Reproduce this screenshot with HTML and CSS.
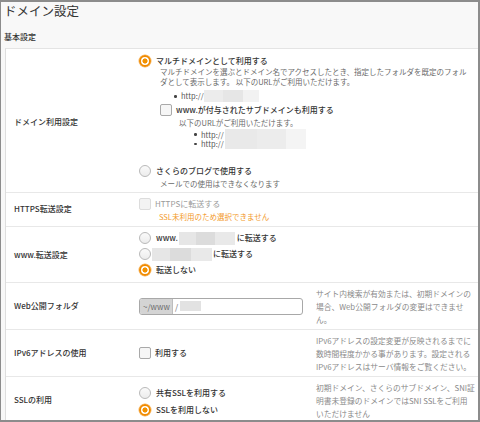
FILE: index.html
```html
<!DOCTYPE html>
<html lang="ja">
<head>
<meta charset="utf-8">
<link rel="stylesheet" href="styles.css">
</head>
<body>
<div class="frame">
  <h1 class="title">ドメイン設定</h1>
  <div class="section">基本設定</div>
  <div class="card">
    <div class="row row-domain">
      <div class="label">ドメイン利用設定</div>
      <div class="content">
        <div class="opt"><span class="radio on"></span><span class="opt-text">マルチドメインとして利用する</span></div>
        <p class="desc ind">マルチドメインを選ぶとドメイン名でアクセスしたとき、指定したフォルダを既定のフォル<br>ダとして表示します。 以下のURLがご利用いただけます。</p>
        <ul class="urls urls-1"><li>http://<span class="blur b1"></span></li></ul>
        <div class="sub">
          <div class="opt"><span class="check"></span><span class="opt-text">www.が付与されたサブドメインも利用する</span></div>
          <p class="desc sub-desc">以下のURLがご利用いただけます。</p>
          <div class="urls-2">
            <ul class="urls"><li>http://</li><li>http://</li></ul>
            <span class="blur b2"></span>
          </div>
        </div>
        <div class="opt opt-blog"><span class="radio"></span><span class="opt-text">さくらのブログで使用する</span></div>
        <p class="desc ind blog-desc">メールでの使用はできなくなります</p>
      </div>
    </div>

    <div class="row row-https">
      <div class="label">HTTPS転送設定</div>
      <div class="content">
        <div class="opt"><span class="check disabled"></span><span class="opt-text muted">HTTPSに転送する</span></div>
        <p class="warn">SSL未利用のため選択できません</p>
      </div>
    </div>

    <div class="row row-www">
      <div class="label">www.転送設定</div>
      <div class="content stack">
        <div class="opt"><span class="radio"></span><span class="opt-text">www.<span class="blur b3"></span>に転送する</span></div>
        <div class="opt"><span class="radio"></span><span class="opt-text tight"><span class="blur b4"></span>に転送する</span></div>
        <div class="opt"><span class="radio on"></span><span class="opt-text">転送しない</span></div>
      </div>
    </div>

    <div class="row row-help">
      <div class="label">Web公開フォルダ</div>
      <div class="content">
        <div class="input"><span class="prefix">~/www</span><span class="slash">/</span><span class="blur b5"></span></div>
      </div>
      <div class="help">サイト内検索が有効または、初期ドメインの<br>場合、Web公開フォルダの変更はできませ<br>ん。</div>
    </div>

    <div class="row row-help">
      <div class="label">IPv6アドレスの使用</div>
      <div class="content">
        <div class="opt"><span class="check"></span><span class="opt-text">利用する</span></div>
      </div>
      <div class="help">IPv6アドレスの設定変更が反映されるまでに<br>数時間程度かかる事があります。設定される<br>IPv6アドレスはサーバ情報をご覧ください。</div>
    </div>

    <div class="row row-help">
      <div class="label">SSLの利用</div>
      <div class="content stack ssl">
        <div class="opt"><span class="radio"></span><span class="opt-text">共有SSLを利用する</span></div>
        <div class="opt"><span class="radio on"></span><span class="opt-text">SSLを利用しない</span></div>
      </div>
      <div class="help">初期ドメイン、さくらのサブドメイン、SNI証<br>明書未登録のドメインではSNI SSLをご利用<br>いただけません</div>
    </div>
  </div>
</div>
</body>
</html>
```
FILE: styles.css
```css
* { box-sizing: border-box; }
html, body { margin: 0; padding: 0; }
body {
  font-family: "Noto Sans CJK JP", "Noto Sans", sans-serif;
  color: #333;
  background: #fff;
}
.frame {
  width: 480px;
  height: 422px;
  overflow: hidden;
  border-style: solid;
  border-color: #8c8c8c;
  border-width: 2px 2px 2px 1px;
  background: #f8f8f8;
}
.title {
  margin: 0;
  padding: 1px 0 0 3px;
  font-size: 12.5px;
  line-height: 16px;
  font-weight: 400;
  color: #333;
}
.section {
  margin-top: 13px;
  padding-left: 3px;
  font-size: 8px;
  line-height: 10px;
  font-weight: 500;
  height: 16px;
}
.card {
  margin-left: 4px;
  background: #fff;
  border-left: 1px solid #dedede;
  border-top: 1px solid #e4e4e4;
  height: 400px;
}
.row {
  display: flex;
  align-items: center;
  border-bottom: 1px solid #e8e8e8;
}
.label {
  width: 133px;
  flex: none;
  padding-left: 8px;
  font-size: 8px;
  line-height: 10px;
  font-weight: 500;
  color: #333;
}
.content { flex: 1; min-width: 0; }
.opt {
  display: flex;
  align-items: center;
  height: 12px;
  white-space: nowrap;
}
.opt-text {
  font-size: 8px;
  line-height: 12px;
  font-weight: 500;
  color: #333;
  margin-left: 5px;
  display: flex;
  align-items: center;
}
.opt-text.tight { margin-left: 1px; }
.opt-text.muted { color: #9a9a9a; font-weight: 400; }
.radio {
  flex: none;
  width: 12px;
  height: 12px;
  border-radius: 50%;
  border: 1px solid #b9b9b9;
  background: linear-gradient(#fafafa, #ececec);
}
.radio.on {
  border: 2px solid #f08a00;
  background: radial-gradient(circle, #f39200 0 2.3px, #fff 2.8px);
  box-shadow: 0 0 0 0.5px #f7b35a;
}
.check {
  flex: none;
  width: 12px;
  height: 12px;
  border: 1px solid #a9a9a9;
  border-radius: 2px;
  background: #f6f6f6;
}
.check.disabled {
  border-color: #dcdcdc;
  background: #f3f3f3;
}
.opt .check + .opt-text { margin-left: 4px; }
.desc {
  margin: 0;
  font-size: 7.5px;
  line-height: 10px;
  color: #6a6a6a;
  white-space: nowrap;
}
.ind { margin-left: 21px; }
.urls {
  list-style: none;
  margin: 0;
  padding: 0;
  font-size: 7.5px;
  color: #555;
}
.urls li { position: relative; }
.urls li::before {
  content: "";
  position: absolute;
  left: -7px;
  top: 50%;
  width: 2.5px;
  height: 2.5px;
  margin-top: -1px;
  border-radius: 50%;
  background: #444;
}
.urls-1 {
  margin: 3px 0 0 42px;
  line-height: 10px;
}
.urls-1 li { display: flex; align-items: center; }
.sub { margin: 2px 0 0 21px; }
.sub-desc { margin: 2px 0 0 19px; }
.urls-2 {
  display: flex;
  align-items: center;
  margin: 1px 0 0 41px;
}
.urls-2 .urls { line-height: 9.5px; }
.opt-blog { margin-top: 16px; }
.blog-desc { margin-top: 2px; }
.row-domain { padding: 6px 0 3px; }
.row-https { padding: 5px 0 4px; }
.row-https .label { padding-bottom: 2px; }
.warn {
  margin: 2px 0 0 20px;
  font-size: 7.5px;
  line-height: 10px;
  color: #f39a2b;
}
.stack { display: flex; flex-direction: column; gap: 4px; }
.row-www { padding: 5px 0 6px; }
.row-www .label { padding-top: 2px; }
.blur {
  display: inline-block;
  height: 13px;
  background: linear-gradient(90deg, #e6e6e6 0 30%, #dcdcdc 30% 65%, #e9e9e9 65% 100%);
}
.b1 { width: 55px; height: 12px; background: linear-gradient(90deg, #ececec 0 35%, #e6e6e6 35% 70%, #f2f2f2 70% 100%); }
.b2 { width: 81px; height: 20px; margin-left: 1px; background: linear-gradient(90deg, #e9e9e9 0 40%, #ececec 40% 75%, #f4f4f4 75% 100%); }
.b3 { width: 56px; margin: 0 2px 0 1px; }
.b4 { width: 60px; margin-right: 1px; }
.b5 { width: 21px; height: 10px; background: #e2e2e2; }
.row-help { padding: 3.5px 0; }
.input {
  width: 164px;
  height: 17px;
  border: 1px solid #a8a8a8;
  border-radius: 3px;
  display: flex;
  align-items: center;
  overflow: hidden;
  font-size: 8px;
  color: #777;
}
.prefix {
  height: 100%;
  width: 33px;
  background: #d4d4d4;
  border-right: 1px solid #bdbdbd;
  display: flex;
  align-items: center;
  padding-left: 3px;
  color: #6a6a6a;
}
.slash { margin: 0 2px 0 2px; color: #666; }
.help {
  width: 162px;
  flex: none;
  font-size: 7.75px;
  line-height: 13px;
  color: #8a8a8a;
  white-space: nowrap;
}
.ssl { gap: 5px; margin-top: 2px; }
```
